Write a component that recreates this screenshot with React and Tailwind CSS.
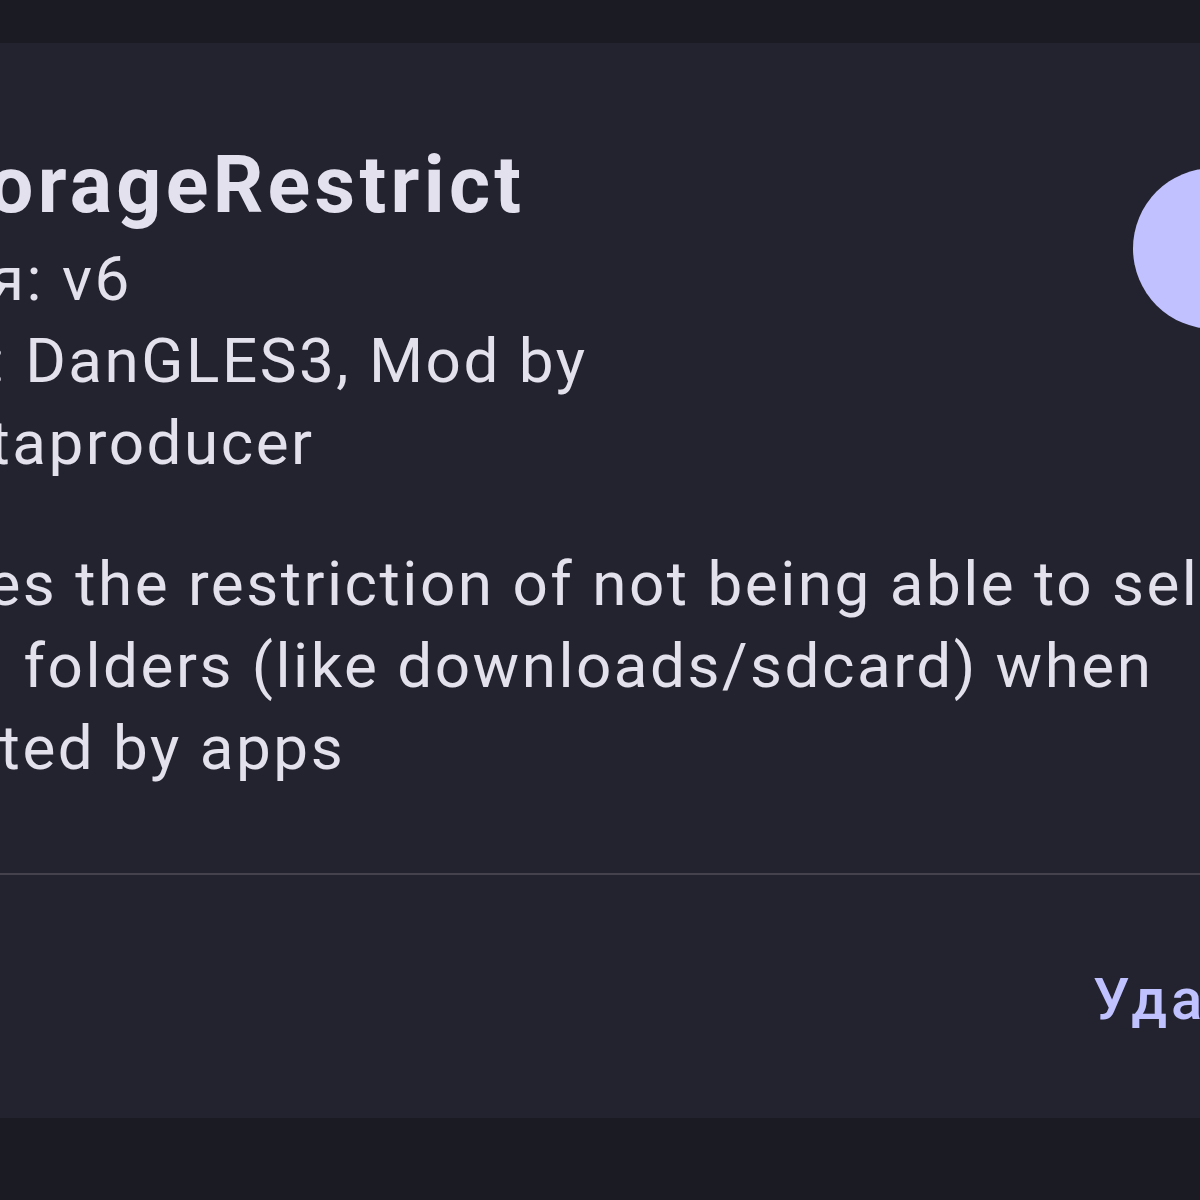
import React from 'react';

export default function App() {
  return (
    <div className="w-[1200px] h-[1200px] overflow-hidden bg-[#1b1b24] pt-[43px] font-['Roboto',sans-serif]">
      <div className="-ml-[200px] w-[1600px] h-[1075px] bg-[#22232e] flex flex-col">
        {/* header: title + meta + switch */}
        <div className="flex pl-[3px] pt-[94px]">
          <div className="w-[1257px] flex flex-col">
            <h1 className="-ml-[6px] text-[79px] leading-[96px] font-bold tracking-[4.3px] text-[#e4e1ee]">NoStorageRestrict</h1>
            <div className="mt-[5px] text-[62px] leading-[82px] tracking-[2.5px] text-[#e3e1ec]">
              <p>Версия: v6</p>
              <p>Автор: DanGLES3, Mod by Vedantaproducer</p>
            </div>
          </div>
          <div className="ml-[73px] mt-[31px] w-[161px] h-[161px] shrink-0 rounded-full bg-[#c1c1ff]" />
        </div>
        <p className="-ml-[3px] mt-[59px] w-[1550px] -indent-[12px] text-[62px] leading-[82px] tracking-[2.5px] text-[#e3e1ec]">
          Removes the restriction of not being able to select certain folders (like downloads/sdcard) when requested by apps
        </p>
        <div className="mt-[84px] h-[2px] bg-[#45424e]" />
        <div className="flex pt-[95px]">
          <button className="ml-[1293px] text-[58px] font-medium tracking-[4px] text-[#c0c1ff] leading-none">Удалить</button>
        </div>
      </div>
    </div>
  );
}
